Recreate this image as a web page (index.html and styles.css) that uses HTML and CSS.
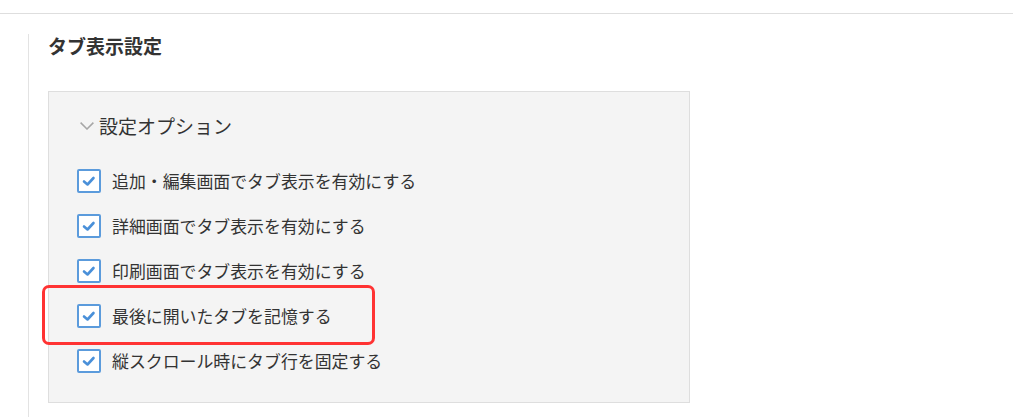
FILE: index.html
```html
<!DOCTYPE html>
<html lang="ja">
<head>
    <meta charset="UTF-8">
    <meta name="viewport" content="width=device-width, initial-scale=1.0">
    <title>タブ表示設定</title>
    <link rel="stylesheet" href="styles.css">
</head>
<body>
    <div class="top-bar"></div>

    <div class="section">
        <h2 class="section-title">タブ表示設定</h2>

        <div class="option-box">
            <div class="option-head">
                <svg class="chevron" width="14" height="8" viewBox="0 0 14 8">
                    <polyline points="0.6,0.6 7,7 13.4,0.6" fill="none" stroke="#a6a6a6" stroke-width="1.5"/>
                </svg>
                <span>設定オプション</span>
            </div>

            <ul class="option-list">
                <li class="option">
                    <span class="check"><svg width="20" height="20" viewBox="0 0 20 20"><polyline points="5,10.5 8.5,13.5 14.5,7" fill="none" stroke="#4a90d9" stroke-width="2.6" stroke-linecap="round" stroke-linejoin="round"/></svg></span>
                    <span class="label">追加・編集画面でタブ表示を有効にする</span>
                </li>
                <li class="option">
                    <span class="check"><svg width="20" height="20" viewBox="0 0 20 20"><polyline points="5,10.5 8.5,13.5 14.5,7" fill="none" stroke="#4a90d9" stroke-width="2.6" stroke-linecap="round" stroke-linejoin="round"/></svg></span>
                    <span class="label">詳細画面でタブ表示を有効にする</span>
                </li>
                <li class="option">
                    <span class="check"><svg width="20" height="20" viewBox="0 0 20 20"><polyline points="5,10.5 8.5,13.5 14.5,7" fill="none" stroke="#4a90d9" stroke-width="2.6" stroke-linecap="round" stroke-linejoin="round"/></svg></span>
                    <span class="label">印刷画面でタブ表示を有効にする</span>
                </li>
                <li class="option highlighted">
                    <span class="check"><svg width="20" height="20" viewBox="0 0 20 20"><polyline points="5,10.5 8.5,13.5 14.5,7" fill="none" stroke="#4a90d9" stroke-width="2.6" stroke-linecap="round" stroke-linejoin="round"/></svg></span>
                    <span class="label">最後に開いたタブを記憶する</span>
                </li>
                <li class="option">
                    <span class="check"><svg width="20" height="20" viewBox="0 0 20 20"><polyline points="5,10.5 8.5,13.5 14.5,7" fill="none" stroke="#4a90d9" stroke-width="2.6" stroke-linecap="round" stroke-linejoin="round"/></svg></span>
                    <span class="label">縦スクロール時にタブ行を固定する</span>
                </li>
            </ul>
        </div>
    </div>
</body>
</html>
```

FILE: styles.css
```css
body {
    font-family: "Noto Sans CJK JP", "Noto Sans", sans-serif;
    background: #fff;
    color: #333;
    margin: 0;
    padding: 0;
}
.top-bar {
    height: 13px;
    border-bottom: 1px solid #dedede;
}
.section {
    margin: 20px 0 0 28px;
    padding: 0 0 20px 19px;
    border-left: 1px solid #e3e3e3;
}
.section-title {
    margin: 0;
    font-size: 19px;
    line-height: 24px;
    font-weight: bold;
    color: #333;
}
.option-box {
    margin-top: 33px;
    width: 640px;
    height: 310px;
    box-sizing: content-box;
    background: #f4f4f4;
    border: 1px solid #dedede;
}
.option-head {
    display: flex;
    align-items: center;
    gap: 5px;
    padding: 22px 0 0 31px;
    font-size: 19px;
    line-height: 24px;
    color: #333;
}
.option-list {
    list-style: none;
    margin: 20px 0 0;
    padding: 0 0 0 28px;
}
.option {
    display: flex;
    align-items: center;
    gap: 11px;
    height: 45px;
    font-size: 16.9px;
    color: #333;
}
.check {
    display: flex;
    align-items: center;
    justify-content: center;
    width: 20px;
    height: 20px;
    border: 2px solid #5b9bdc;
    border-radius: 2px;
    background: #fff;
}
.highlighted {
    position: relative;
}
.highlighted::before {
    content: "";
    position: absolute;
    left: -35px;
    top: -8px;
    width: 327px;
    height: 54px;
    border: 3px solid #ff3333;
    border-radius: 7px;
}
```
